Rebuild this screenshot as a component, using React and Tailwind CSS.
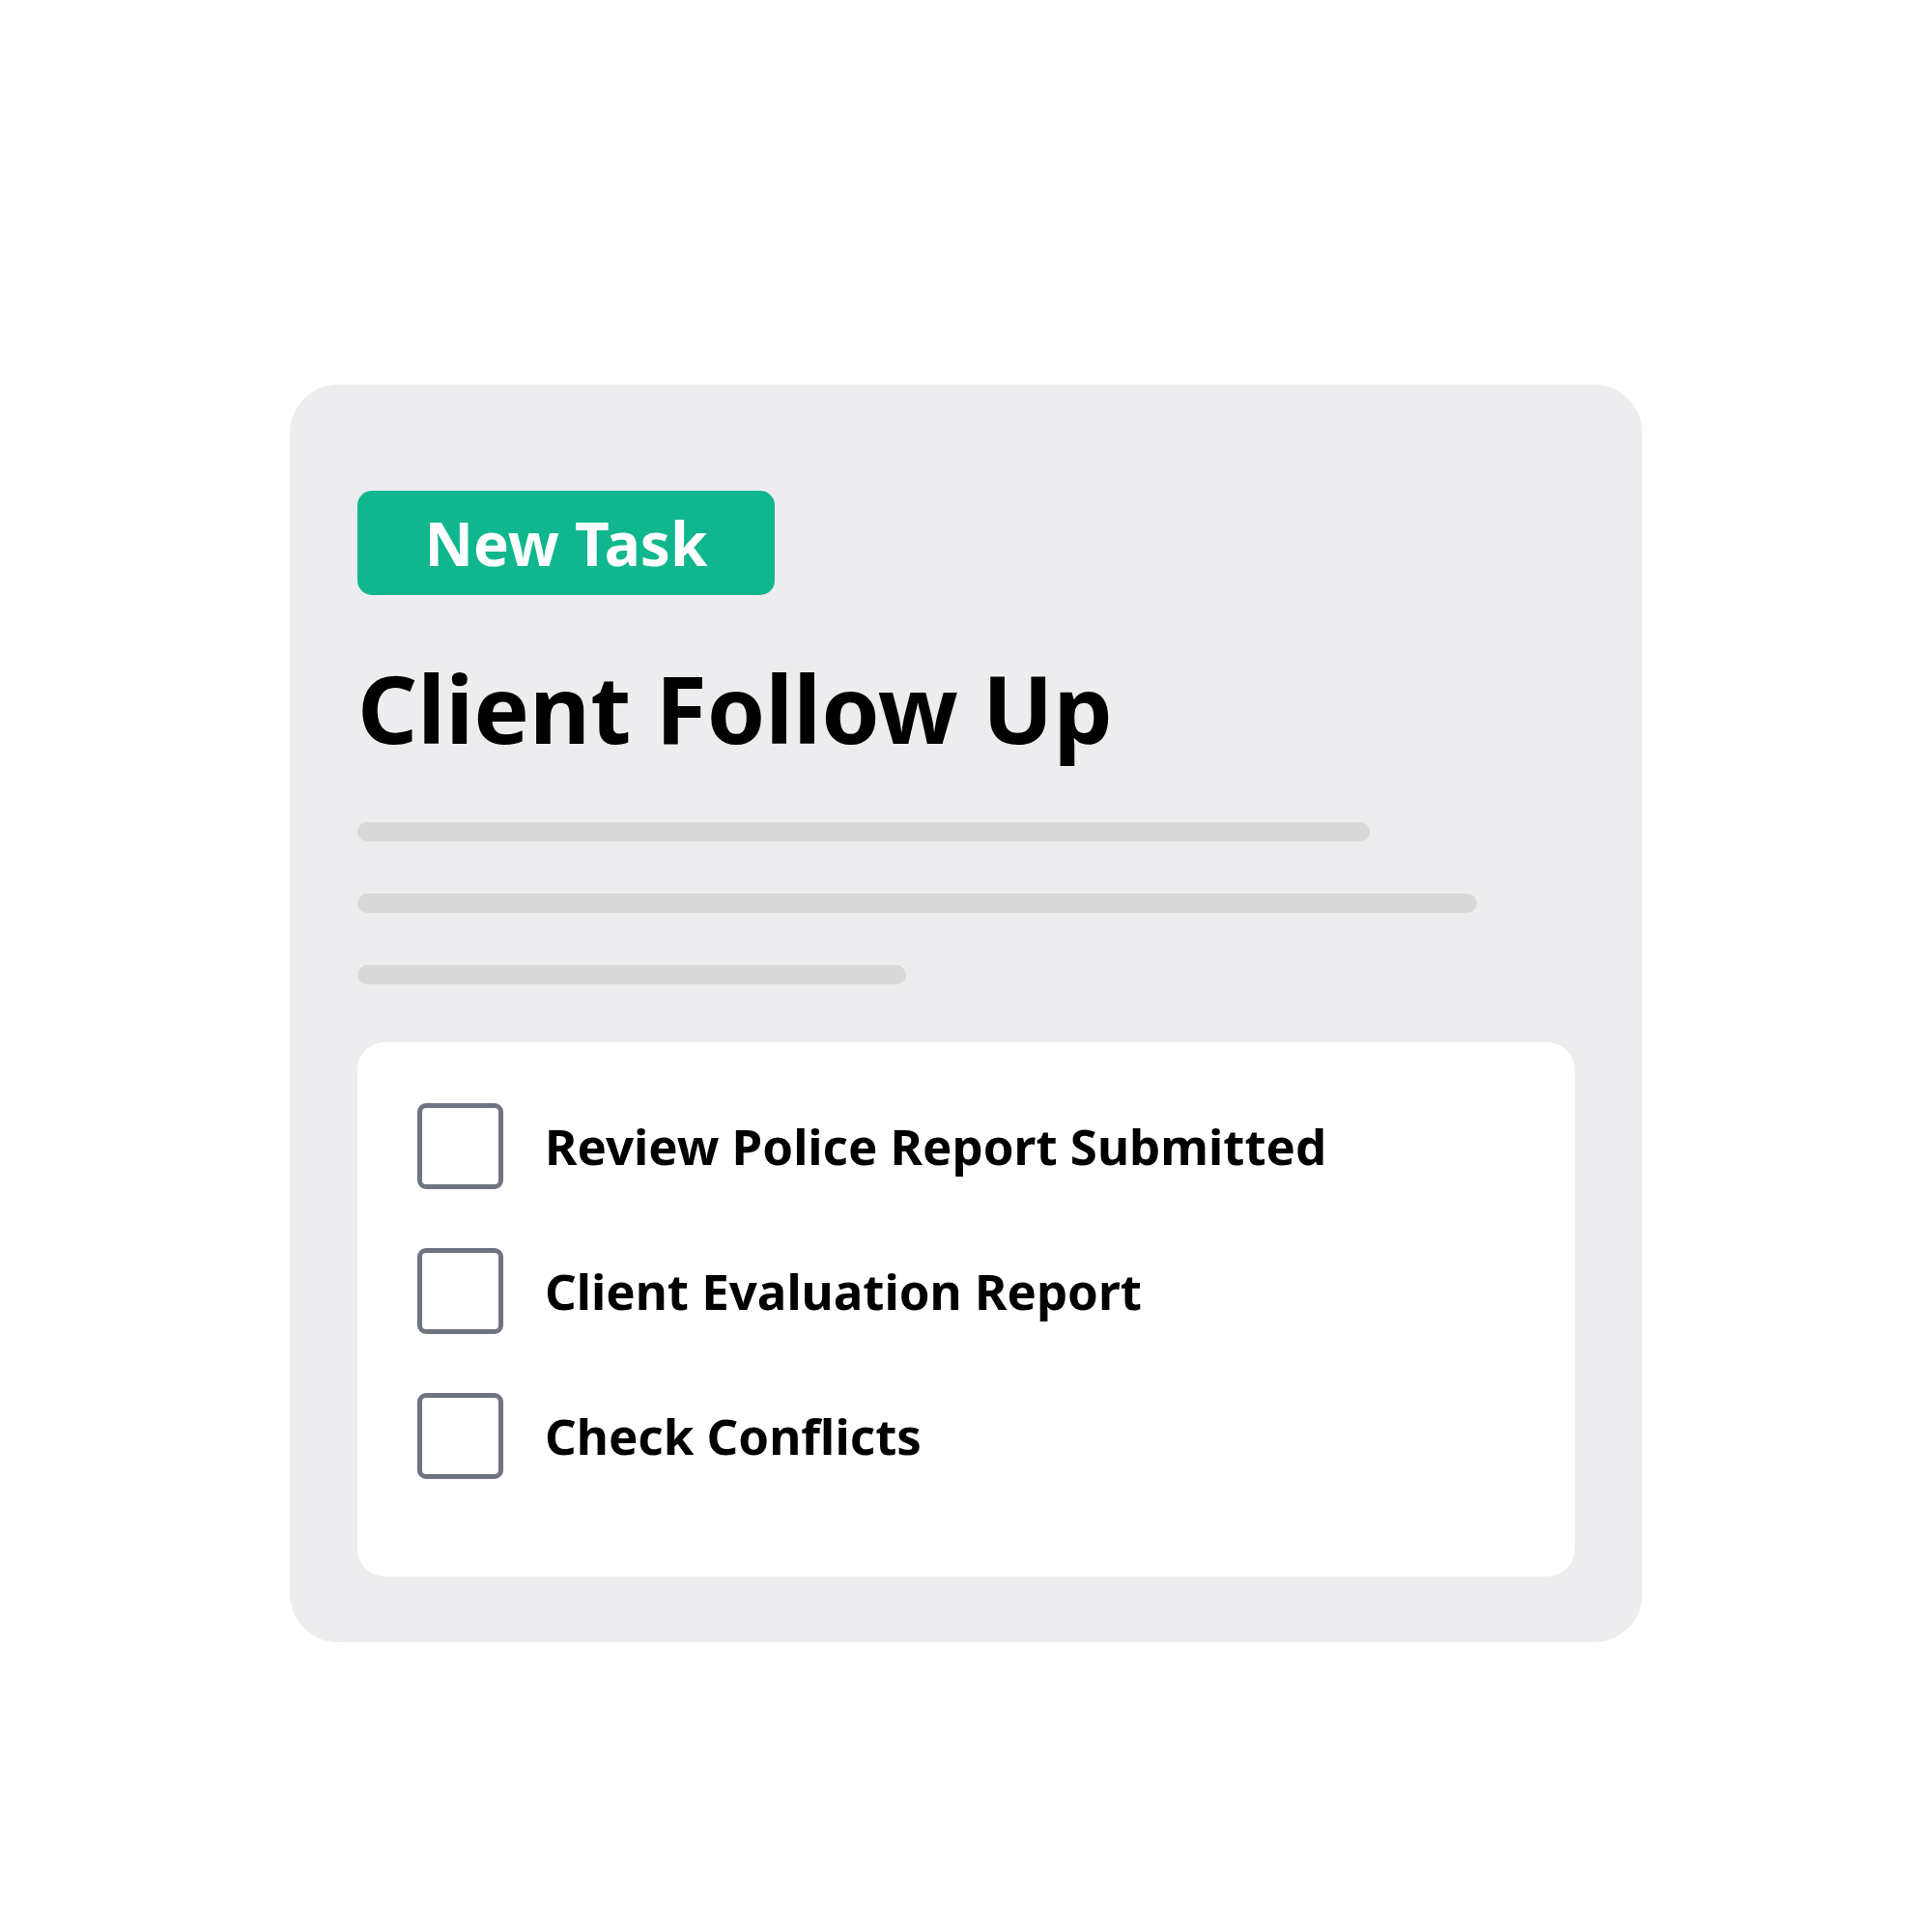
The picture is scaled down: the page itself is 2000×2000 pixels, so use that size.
const tasks = [
  "Review Police Report Submitted",
  "Client Evaluation Report",
  "Check Conflicts",
];

function Checkbox() {
  return (
    <span className="w-[89px] h-[89px] shrink-0 rounded-[9px] border-[5px] border-[#6f7482] bg-white" />
  );
}

export default function App() {
  return (
    <div
      className="w-[2000px] h-[2000px] bg-white pt-[398px] pl-[300px]"
      style={{ fontFamily: '"Noto Sans", "Open Sans", sans-serif' }}
    >
      <div className="w-[1400px] h-[1302px] bg-[#ededef] rounded-[50px] pt-[110px] px-[70px] pb-[68px] flex flex-col">

        <div className="w-[432px] h-[108px] rounded-[15px] bg-[#0fb68e] flex items-center justify-center">
          <span className="text-white font-bold text-[62px] leading-none">
            New Task
          </span>
        </div>

        <h1 className="mt-[68px] text-black font-bold text-[97px] leading-none">
          Client Follow Up
        </h1>

        <div className="mt-[70px] flex flex-col gap-[54px]">
          <div className="w-[1048px] h-[20px] rounded-full bg-[#d9d9d9]" />
          <div className="w-[1159px] h-[20px] rounded-full bg-[#d9d9d9]" />
          <div className="w-[568px] h-[20px] rounded-full bg-[#d9d9d9]" />
        </div>

        <div className="mt-[60px] flex-1 bg-white rounded-[28px] pt-[63px] pl-[62px] flex flex-col gap-[61px]">
          {tasks.map((t) => (
            <div key={t} className="flex items-center gap-[43px]">
              <Checkbox />
              <span className="text-black font-bold text-[51px] leading-none">
                {t}
              </span>
            </div>
          ))}
        </div>

      </div>
    </div>
  );
}
